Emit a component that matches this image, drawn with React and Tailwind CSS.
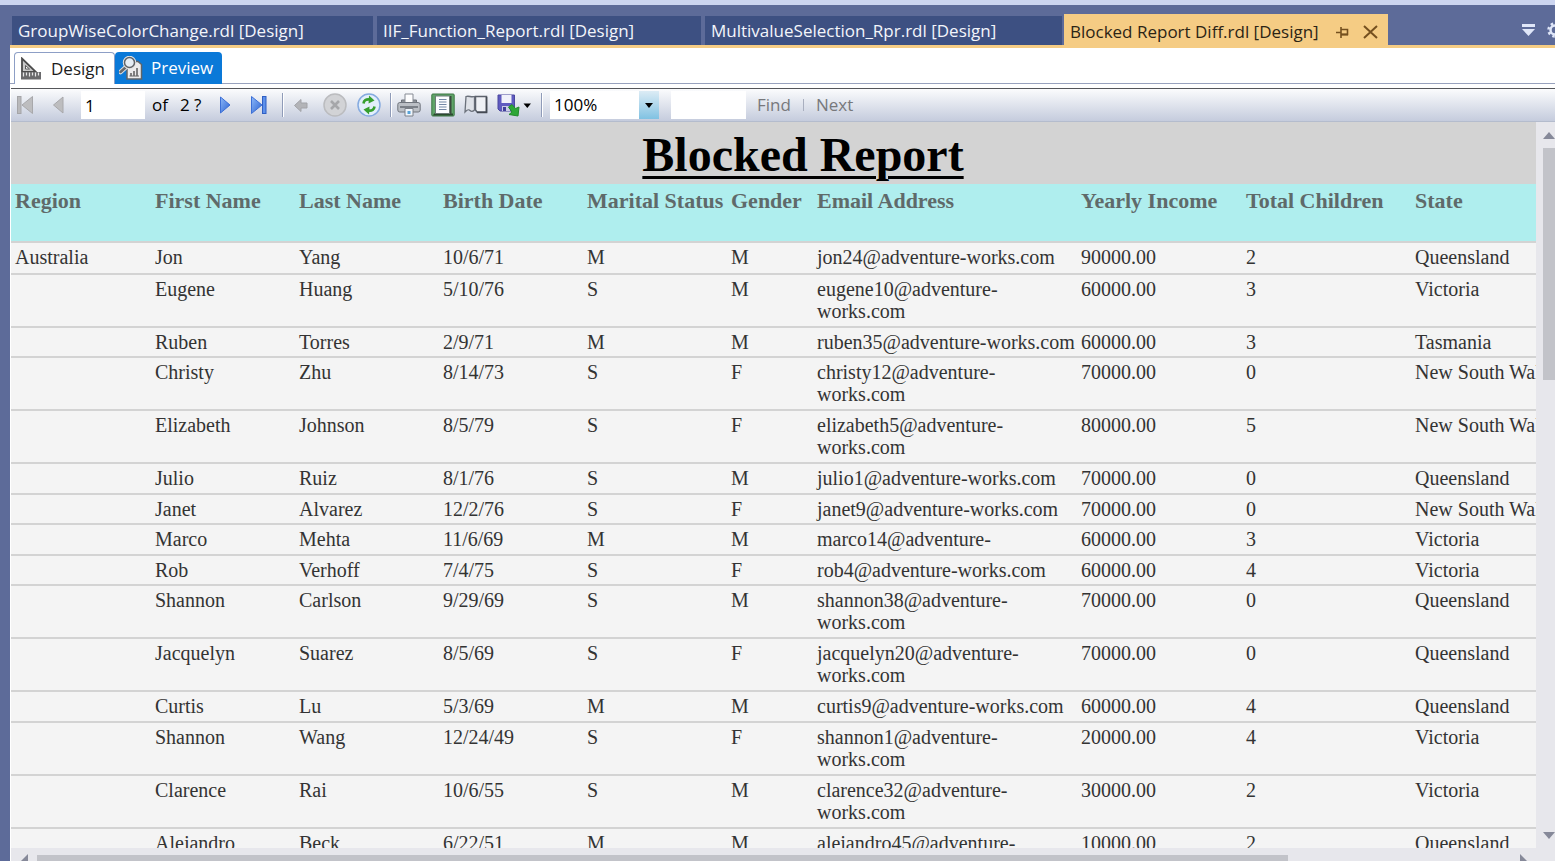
import React from "react";

const TABS = [
  { name: "GroupWiseColorChange.rdl [Design]", width: "w-[361px]" },
  { name: "IIF_Function_Report.rdl [Design]", width: "w-[324px]" },
  { name: "MultivalueSelection_Rpr.rdl [Design]", width: "w-[357px]" },
];

const COLUMNS = [
  { title: "Region", width: "w-[140px]" },
  { title: "First Name", width: "w-[144px]" },
  { title: "Last Name", width: "w-[144px]" },
  { title: "Birth Date", width: "w-[144px]" },
  { title: "Marital Status", width: "w-[144px]" },
  { title: "Gender", width: "w-[86px]" },
  { title: "Email Address", width: "w-[264px]" },
  { title: "Yearly Income", width: "w-[165px]" },
  { title: "Total Children", width: "w-[169px]" },
  { title: "State", width: "w-[184px]" },
];

const ROWS = [
  ["Australia", "Jon", "Yang", "10/6/71", "M", "M", "jon24@adventure-works.com", "90000.00", "2", "Queensland"],
  ["", "Eugene", "Huang", "5/10/76", "S", "M", "eugene10@adventure-\nworks.com", "60000.00", "3", "Victoria"],
  ["", "Ruben", "Torres", "2/9/71", "M", "M", "ruben35@adventure-works.com", "60000.00", "3", "Tasmania"],
  ["", "Christy", "Zhu", "8/14/73", "S", "F", "christy12@adventure-\nworks.com", "70000.00", "0", "New South Wales"],
  ["", "Elizabeth", "Johnson", "8/5/79", "S", "F", "elizabeth5@adventure-\nworks.com", "80000.00", "5", "New South Wales"],
  ["", "Julio", "Ruiz", "8/1/76", "S", "M", "julio1@adventure-works.com", "70000.00", "0", "Queensland"],
  ["", "Janet", "Alvarez", "12/2/76", "S", "F", "janet9@adventure-works.com", "70000.00", "0", "New South Wales"],
  ["", "Marco", "Mehta", "11/6/69", "M", "M", "marco14@adventure-", "60000.00", "3", "Victoria"],
  ["", "Rob", "Verhoff", "7/4/75", "S", "F", "rob4@adventure-works.com", "60000.00", "4", "Victoria"],
  ["", "Shannon", "Carlson", "9/29/69", "S", "M", "shannon38@adventure-\nworks.com", "70000.00", "0", "Queensland"],
  ["", "Jacquelyn", "Suarez", "8/5/69", "S", "F", "jacquelyn20@adventure-\nworks.com", "70000.00", "0", "Queensland"],
  ["", "Curtis", "Lu", "5/3/69", "M", "M", "curtis9@adventure-works.com", "60000.00", "4", "Queensland"],
  ["", "Shannon", "Wang", "12/24/49", "S", "F", "shannon1@adventure-\nworks.com", "20000.00", "4", "Victoria"],
  ["", "Clarence", "Rai", "10/6/55", "S", "M", "clarence32@adventure-\nworks.com", "30000.00", "2", "Victoria"],
  ["", "Alejandro", "Beck", "6/22/51", "M", "M", "alejandro45@adventure-\nworks.com", "10000.00", "2", "Queensland"],
];

function Icon({ size = 24, children }) {
  return (
    <svg width={size} height="24" viewBox={`0 0 ${size} 24`} aria-hidden="true" className="block shrink-0">
      {children}
    </svg>
  );
}

function ToolButton({ label, className = "", children }) {
  return (
    <button type="button" aria-label={label} className={`shrink-0 ${className}`}>
      {children}
    </button>
  );
}

function Separator({ className = "" }) {
  return <span className={`h-6 w-px shrink-0 bg-[#8f9bb8] shadow-[1px_0_0_#fff] ${className}`} />;
}

function FirstIcon() {
  return (
    <Icon>
      <rect x="4.500" y="3.500" width="3.500" height="17" fill="#b9b9bb" stroke="#a5a5a8" />
      <path d="M19.500 3.500v17L9 12z" fill="#bdbdbf" stroke="#a8a8ab" />
    </Icon>
  );
}

function PrevIcon() {
  return (
    <Icon>
      <path d="M17 4v16L7.500 12z" fill="#bdbdbf" stroke="#a8a8ab" />
    </Icon>
  );
}

function NextIcon() {
  return (
    <Icon>
      <path d="M7.500 4v16L17 12z" fill="url(#blue)" stroke="#3c6fd6" />
    </Icon>
  );
}

function LastIcon() {
  return (
    <Icon>
      <path d="M4.500 3.500v17L15 12z" fill="url(#blue)" stroke="#3c6fd6" />
      <rect x="15.500" y="3.500" width="3.500" height="17" fill="#5d90ea" stroke="#2f5fc4" />
    </Icon>
  );
}

function BackIcon() {
  return (
    <Icon>
      <path d="M5.500 12.500l6.500-6v3.500h6v5h-6v3.500z" fill="#b3b4b8" stroke="#a2a3a8" />
    </Icon>
  );
}

function StopIcon() {
  return (
    <Icon>
      <circle cx="12" cy="12" r="11" fill="#d2d3d6" stroke="#bbbcbf" strokeWidth="1.500" />
      <path d="M8 8l8 8M16 8l-8 8" stroke="#a6a7aa" strokeWidth="2.600" />
    </Icon>
  );
}

function RefreshIcon() {
  return (
    <Icon>
      <circle cx="12" cy="12" r="11" fill="#e2effc" stroke="#86abe0" strokeWidth="1.500" />
      <path d="M6.500 10.500c.3-3 2.500-4.500 6-4" fill="none" stroke="#36a02f" strokeWidth="2.600" />
      <path d="M12 2.500l5.500 5-6 3z" fill="#36a02f" />
      <path d="M17.500 13.500c-.3 3-2.500 4.500-6 4" fill="none" stroke="#36a02f" strokeWidth="2.600" />
      <path d="M12 21.500l-5.500-5 6-3z" fill="#36a02f" />
    </Icon>
  );
}

function PrinterIcon() {
  return (
    <Icon>
      <path d="M4.500 7h15v5h-15z" fill="#8d9299" stroke="#6c7179" />
      <path d="M8 1h8v9H8z" fill="#fdfdfe" stroke="#868b94" />
      <rect x=".8" y="9.500" width="22.400" height="9.500" rx="2" fill="#bbbfc5" stroke="#70757d" />
      <path d="M3 14h18" stroke="#7b8088" strokeWidth="2" />
      <path d="M8 15.500h8V23H8z" fill="#eff5fb" stroke="#7c8088" />
      <path d="M10.500 18h3v3h-3z" fill="#58a3d8" />
    </Icon>
  );
}

function LayoutIcon() {
  return (
    <Icon>
      <rect x=".8" y="1" width="22.400" height="22" rx="1" fill="#5fa468" stroke="#3c7744" />
      <path d="M3 20.500h19v2H2z" fill="#2b4a2f" />
      <path d="M18.500 3h2v18h-2z" fill="#3b4a3e" />
      <rect x="4.500" y="3" width="14" height="17.500" fill="#fbfcff" stroke="#6b7a76" />
      <path d="M8 6.500h7.500M8 9h7.500M8 11.500h7.500M8 14h7.500M8 16.500h7.500" stroke="#7388a6" strokeWidth="1.200" />
    </Icon>
  );
}

function PageSetupIcon() {
  return (
    <Icon>
      <path d="M2 3.500c3-1 5 1 8.500 0V17c-2 2-3 2-4.500.5S3.500 16.500 1 19z" fill="#dfe2e8" stroke="#6b717b" strokeWidth="1.300" />
      <path d="M11.500 3.500h11V19H13l-1.500-2z" fill="#eff1f5" stroke="#5c626c" strokeWidth="1.500" />
      <path d="M22.500 4v15.500H13" fill="none" stroke="#454a53" strokeWidth="1.600" />
    </Icon>
  );
}

function ExportIcon() {
  return (
    <Icon size={36}>
      <path d="M1 2h16.500v16H3l-2-2z" fill="#5f5bc0" stroke="#4a479f" />
      <path d="M4.500 2h10v8h-10z" fill="#f0f1fa" />
      <path d="M5 13h8v5H5z" fill="#c9cbe6" />
      <path d="M6 14h3v4H6z" fill="#413f99" />
      <path d="M11.500 14l3.500-2.500 3.500 4 3.500-1.500-1 9-9-1.500 3-2.500z" fill="#2da737" stroke="#228a2c" />
      <path d="M26.500 10.500h7.500l-3.700 4.500z" fill="#000" />
    </Icon>
  );
}

function DesignIcon() {
  return (
    <Icon>
      <path d="M3 1.500v13.500h14z" fill="#c9c9c9" stroke="#4c4c4c" strokeWidth="1.800" />
      <path d="M6.500 8.500v3.500h4z" fill="#fff" stroke="#5a5a5a" />
      <rect x="2" y="15" width="20" height="7.500" fill="#6a6a6c" />
      <path d="M4.500 15.500v4M7.500 15.500v3M10.500 15.500v4M13.500 15.500v3M16.500 15.500v4M19.500 15.500v3" stroke="#e8e8e8" strokeWidth="1.200" />
    </Icon>
  );
}

function PreviewIcon() {
  return (
    <Icon>
      <path d="M8 5.500h11l3.500 3V23H8z" fill="#ececec" stroke="#5f6468" strokeWidth="1.500" />
      <path d="M10.500 20h9.500" stroke="#777" strokeWidth="1.200" />
      <path d="M12 20v-3M15 20v-5M18 20v-8" stroke="#6d6d6d" strokeWidth="1.700" />
      <path d="M6.500 11.500l-5 4.500" stroke="#dedede" strokeWidth="4.500" strokeLinecap="round" />
      <path d="M6.500 11.500l-5 4.500" stroke="#65696d" strokeWidth="2.500" strokeLinecap="round" />
      <circle cx="10.500" cy="6.500" r="5" fill="#e6eef5" stroke="#e4e4e4" strokeWidth="3.500" />
      <circle cx="10.500" cy="6.500" r="5" fill="#e6eef5" stroke="#5f6367" strokeWidth="1.500" />
    </Icon>
  );
}

function TabStrip() {
  return (
    <div className="flex h-10 shrink-0 items-end bg-[#5d6b99] pl-3 text-[17px] leading-6">
      <div className="flex min-w-0 gap-1">
        {TABS.map((tab) => (
          <button
            key={tab.name}
            type="button"
            className={`h-[29px] overflow-hidden bg-[#3d5082] pl-[6px] text-left whitespace-nowrap text-[#f3f5fb] ${tab.width}`}
          >
            {tab.name}
          </button>
        ))}
      </div>
      <div className="ml-[2px] flex h-[31px] w-[324px] shrink-0 items-center bg-[#f5cc84] pt-1 pl-[6px] text-[#2c2415]">
        <button type="button" className="whitespace-nowrap">
          Blocked Report Diff.rdl [Design]
        </button>
        <button type="button" aria-label="Pin tab" className="ml-auto">
          <svg width="13" height="12" viewBox="0 0 13 12" className="block" aria-hidden="true">
            <path d="M0 6.500h5M5 1v11M5 3.500h6.500v5H5" fill="none" stroke="#75501f" strokeWidth="1.600" />
            <path d="M5 8.500h7" stroke="#75501f" strokeWidth="2" />
          </svg>
        </button>
        <button type="button" aria-label="Close tab" className="mr-[10px] ml-[14px]">
          <svg width="15" height="14" viewBox="0 0 15 14" className="block" aria-hidden="true">
            <path d="M1 1l13 12M14 1L1 13" stroke="#75501f" strokeWidth="2" />
          </svg>
        </button>
      </div>
      <div className="ml-auto flex h-[31px] w-[33px] shrink-0 items-center gap-3 overflow-hidden">
        <button type="button" aria-label="Window list" className="shrink-0">
          <svg width="13" height="12" viewBox="0 0 13 12" className="block" aria-hidden="true">
            <path d="M0 0h13v3H0zM0 5h13l-6.500 7z" fill="#dfe6f8" />
          </svg>
        </button>
        <button type="button" aria-label="Options" className="shrink-0">
          <svg width="16" height="16" viewBox="0 0 16 16" className="block" aria-hidden="true">
            <circle cx="8" cy="8" r="4.500" fill="none" stroke="#dfe6f8" strokeWidth="2.500" />
            <circle cx="8" cy="8" r="6.500" fill="none" stroke="#dfe6f8" strokeWidth="2.500" strokeDasharray="2.500 2.600" />
          </svg>
        </button>
      </div>
    </div>
  );
}

function ViewTabs() {
  return (
    <div className="flex h-9 shrink-0 items-end border-b border-[#98a2bd] bg-white pl-1 text-[17px] leading-6">
      <button
        type="button"
        className="-mb-px flex h-8 w-[101px] items-center gap-2 rounded-t border border-b-0 border-[#8d9fc6] bg-white pl-1 text-[#1c1c1c]"
      >
        <DesignIcon />
        Design
      </button>
      <button
        type="button"
        className="-mb-px flex h-8 w-[107px] items-center gap-2 rounded-t bg-[#0a79d8] pl-1 text-white"
      >
        <PreviewIcon />
        Preview
      </button>
    </div>
  );
}

function Toolbar() {
  return (
    <div className="mt-1 flex h-[34px] shrink-0 items-center border-t border-b border-t-[#55565a] border-b-[#b4bccd] bg-linear-to-b from-[#fbfcfd] to-[#c5ccdd] pl-[2px] text-[17px] leading-6 text-black">
      <ToolButton label="First page"><FirstIcon /></ToolButton>
      <ToolButton label="Previous page" className="ml-[9px]"><PrevIcon /></ToolButton>
      <input
        type="text"
        aria-label="Current page"
        defaultValue="1"
        className="ml-[11px] h-7 w-16 shrink-0 bg-white px-1 outline-none"
      />
      <span className="flex w-[68px] shrink-0 gap-3 pl-[7px]">
        <span>of</span>
        <span>2 ?</span>
      </span>
      <ToolButton label="Next page"><NextIcon /></ToolButton>
      <ToolButton label="Last page" className="ml-[10px]"><LastIcon /></ToolButton>
      <Separator className="mr-[6px] ml-[11px]" />
      <ToolButton label="Back"><BackIcon /></ToolButton>
      <ToolButton label="Stop" className="ml-[10px]"><StopIcon /></ToolButton>
      <ToolButton label="Refresh" className="ml-[10px]"><RefreshIcon /></ToolButton>
      <Separator className="mr-[6px] ml-[9px]" />
      <ToolButton label="Print"><PrinterIcon /></ToolButton>
      <ToolButton label="Print layout" className="ml-[10px]"><LayoutIcon /></ToolButton>
      <ToolButton label="Page setup" className="ml-[9px]"><PageSetupIcon /></ToolButton>
      <ToolButton label="Export" className="ml-[9px]"><ExportIcon /></ToolButton>
      <Separator className="mx-[8px]" />
      <div className="relative h-7 w-[109px] shrink-0 bg-white">
        <select aria-label="Zoom" className="h-full w-full appearance-none bg-transparent pl-1 outline-none">
          <option>100%</option>
        </select>
        <span className="pointer-events-none absolute inset-y-0 right-0 flex w-5 items-center justify-center bg-linear-to-b from-[#dcecf5] to-[#80c2e2]">
          <svg width="8" height="5" viewBox="0 0 8 5" aria-hidden="true">
            <path d="M0 0h8L4 5z" fill="#000" />
          </svg>
        </span>
      </div>
      <input
        type="text"
        aria-label="Search text"
        className="ml-3 h-7 w-[75px] shrink-0 bg-white px-1 outline-none"
      />
      <button type="button" className="ml-[11px] text-[#77787c]">Find</button>
      <span className="mx-3 h-3 w-px bg-[#a9afbf]" />
      <button type="button" className="text-[#77787c]">Next</button>
    </div>
  );
}

function Report() {
  return (
    <div className="min-w-0 flex-1 overflow-hidden bg-[#f4f4f4] font-['Liberation_Serif','Times_New_Roman',serif]">
      <div className="w-[1584px]">
        <h1 className="h-[62px] bg-[#d3d3d3] pt-[5px] text-center text-5xl leading-[56px] font-bold text-black underline decoration-[3px] underline-offset-[5px]">
          Blocked Report
        </h1>
        <table className="w-full table-fixed border-collapse text-left">
          <thead>
            <tr className="h-[58px] border-b-2 border-[#d3d3d3] bg-[#afeeee] align-top text-[22px] leading-6 text-[#5f6a6a]">
              {COLUMNS.map((column) => (
                <th key={column.title} scope="col" className={`px-1 pt-[5px] font-bold whitespace-nowrap ${column.width}`}>
                  {column.title}
                </th>
              ))}
            </tr>
          </thead>
          <tbody className="text-xl leading-[22px] text-[#333]">
            {ROWS.map((row, index) => (
              <tr
                key={index}
                className={`border-b-2 border-[#d3d3d3] align-top ${row[6].includes("\n") ? "h-[53px]" : "h-[30px] first:h-8 even:h-[31px]"}`}
              >
                {row.map((value, cell) => (
                  <td key={cell} className="px-1 pt-[3px] whitespace-pre">
                    {value}
                  </td>
                ))}
              </tr>
            ))}
          </tbody>
        </table>
      </div>
    </div>
  );
}

function VerticalScroll() {
  return (
    <div className="flex w-[19px] shrink-0 flex-col items-end overflow-hidden bg-[#e7e7ec]">
      <svg width="12" height="26" viewBox="0 0 12 26" className="shrink-0" aria-hidden="true">
        <path d="M0 17l6-7 6 7z" fill="#868999" />
      </svg>
      <div className="min-h-0 w-3 flex-[232] bg-[#c2c3c9]" />
      <div className="min-h-0 flex-[452]" />
      <svg width="12" height="16" viewBox="0 0 12 16" className="shrink-0" aria-hidden="true">
        <path d="M0 0h12L6 7z" fill="#868999" />
      </svg>
    </div>
  );
}

function HorizontalScroll() {
  return (
    <div className="flex h-[13px] shrink-0 items-end overflow-hidden bg-[#e7e7ec] pr-7">
      <svg width="26" height="7" viewBox="0 0 26 7" className="shrink-0" aria-hidden="true">
        <path d="M17 0v7h-7z" fill="#868999" />
      </svg>
      <div className="h-[6px] flex-[1251] bg-[#c2c3c9]" />
      <div className="flex-[232]" />
      <svg width="7" height="7" viewBox="0 0 7 7" className="shrink-0" aria-hidden="true">
        <path d="M0 0v7h7z" fill="#868999" />
      </svg>
    </div>
  );
}

export default function App() {
  return (
    <div className="flex h-screen flex-col overflow-hidden border-t-5 border-[#ccd5f0] bg-[#5d6b99] font-['Open_Sans','Segoe_UI',sans-serif]">
      <svg width="0" height="0" className="absolute" aria-hidden="true">
        <linearGradient id="blue" x1="0" y1="0" x2="1" y2="1">
          <stop offset="0" stopColor="#8db9fa" />
          <stop offset="1" stopColor="#2c62cf" />
        </linearGradient>
      </svg>
      <TabStrip />
      <main className="ml-[10px] flex min-h-0 flex-1 flex-col border-t-3 border-[#f5cc84] bg-white">
        <ViewTabs />
        <div className="flex min-h-0 flex-1 flex-col pl-px">
          <Toolbar />
          <div className="flex min-h-0 flex-1">
            <Report />
            <VerticalScroll />
          </div>
          <HorizontalScroll />
        </div>
      </main>
    </div>
  );
}
